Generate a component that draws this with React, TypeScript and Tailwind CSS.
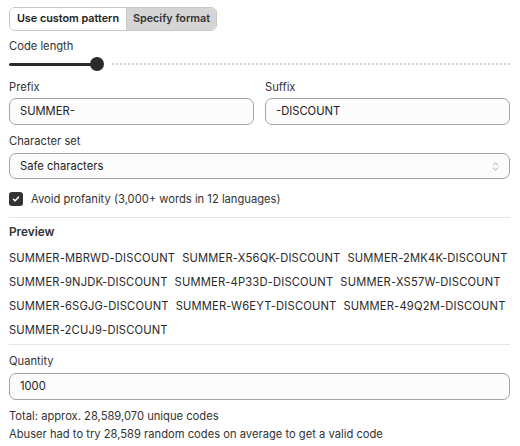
import { ChevronsUpDown } from 'lucide-react'

const codes = [
  'SUMMER-MBRWD-DISCOUNT',
  'SUMMER-X56QK-DISCOUNT',
  'SUMMER-2MK4K-DISCOUNT',
  'SUMMER-9NJDK-DISCOUNT',
  'SUMMER-4P33D-DISCOUNT',
  'SUMMER-XS57W-DISCOUNT',
  'SUMMER-6SGJG-DISCOUNT',
  'SUMMER-W6EYT-DISCOUNT',
  'SUMMER-49Q2M-DISCOUNT',
  'SUMMER-2CUJ9-DISCOUNT',
]

function Field({ value }: { value: string }) {
  return (
    <div className="flex h-[27px] items-center rounded-[7px] border border-[#a3a3a3] bg-[#fcfcfc] px-[10px] text-[11.2px] text-[#222]">
      {value}
    </div>
  )
}

export default function App() {
  return (
    <div
      className="min-h-[446px] w-[520px] bg-white pl-[9px] pr-[10px] pt-[7px] text-[11.2px] text-[#2a2a2a]"
      style={{ fontFamily: 'Inter, "Noto Sans", sans-serif' }}
    >
      {/* mode toggle */}
      <div className="flex h-[24px] w-[208px] overflow-hidden rounded-[6px] border border-[#c8c8c8] text-[10.8px] font-semibold">
        <button type="button" className="flex w-[116px] items-center justify-center bg-white text-[#222]">
          Use custom pattern
        </button>
        <button type="button" className="flex flex-1 items-center justify-center border-l border-[#c8c8c8] bg-[#d5d5d5] text-[#333]">
          Specify format
        </button>
      </div>

      <div className="mt-[6px] flex h-[18px] items-center text-[#333]">Code length</div>
      <div className="relative flex h-[18px] items-center">
        <div className="h-[3px] w-[88px] rounded-full bg-[#2b2b2b]" />
        <div className="h-[14px] w-[14px] -translate-x-[7px] rounded-full bg-[#2b2b2b]" />
        <div className="ml-[1px] flex-1 border-t-2 border-dotted border-[#d4d4d4]" />
      </div>

      <div className="mt-[5px] grid grid-cols-2 gap-x-[11px]">
        <div>
          <div className="flex h-[18px] items-center text-[#333]">Prefix</div>
          <div className="mt-[2px]">
            <Field value="SUMMER-" />
          </div>
        </div>
        <div>
          <div className="flex h-[18px] items-center text-[#333]">Suffix</div>
          <div className="mt-[2px]">
            <Field value="-DISCOUNT" />
          </div>
        </div>
      </div>

      <div className="mt-[7px] flex h-[18px] items-center text-[#333]">Character set</div>
      <div className="mt-[3px] flex h-[26px] items-center justify-between rounded-[7px] border border-[#a3a3a3] bg-[#fcfcfc] pl-[10px] pr-[8px] text-[#222]">
        <span>Safe characters</span>
        <ChevronsUpDown size={11} strokeWidth={1.5} className="text-[#777]" />
      </div>

      <div className="mt-[11px] flex h-[18px] items-center gap-[8px] text-[#333]">
        <span className="flex h-[14px] w-[14px] items-center justify-center rounded-[3px] bg-[#333]">
          <svg viewBox="0 0 12 12" className="h-[10px] w-[10px]" fill="none" stroke="white" strokeWidth={1.8} strokeLinecap="round" strokeLinejoin="round">
            <path d="M3 6.3 5 8.2 9 3.8" />
          </svg>
        </span>
        Avoid profanity (3,000+ words in 12 languages)
      </div>

      <div className="mt-[9px] h-px bg-[#e6e6e6]" />

      <div className="mt-[6px] flex h-[18px] items-center text-[11.8px] font-semibold text-[#333]">Preview</div>
      <div className="mt-[4px] flex flex-wrap gap-x-[7px] leading-[24px] tracking-[0.17px] text-[#2a2a2a]">
        {codes.map((code) => (
          <span key={code}>{code}</span>
        ))}
      </div>

      <div className="mt-[2px] h-px bg-[#e6e6e6]" />

      <div className="mt-[7px] flex h-[18px] items-center text-[#333]">Quantity</div>
      <div className="mt-[3px]">
        <Field value="1000" />
      </div>

      <div className="mt-[7px] flex h-[18px] items-center text-[#333]">Total: approx. 28,589,070 unique codes</div>
      <div className="flex h-[18px] items-center text-[#333]">
        Abuser had to try 28,589 random codes on average to get a valid code
      </div>
    </div>
  )
}
